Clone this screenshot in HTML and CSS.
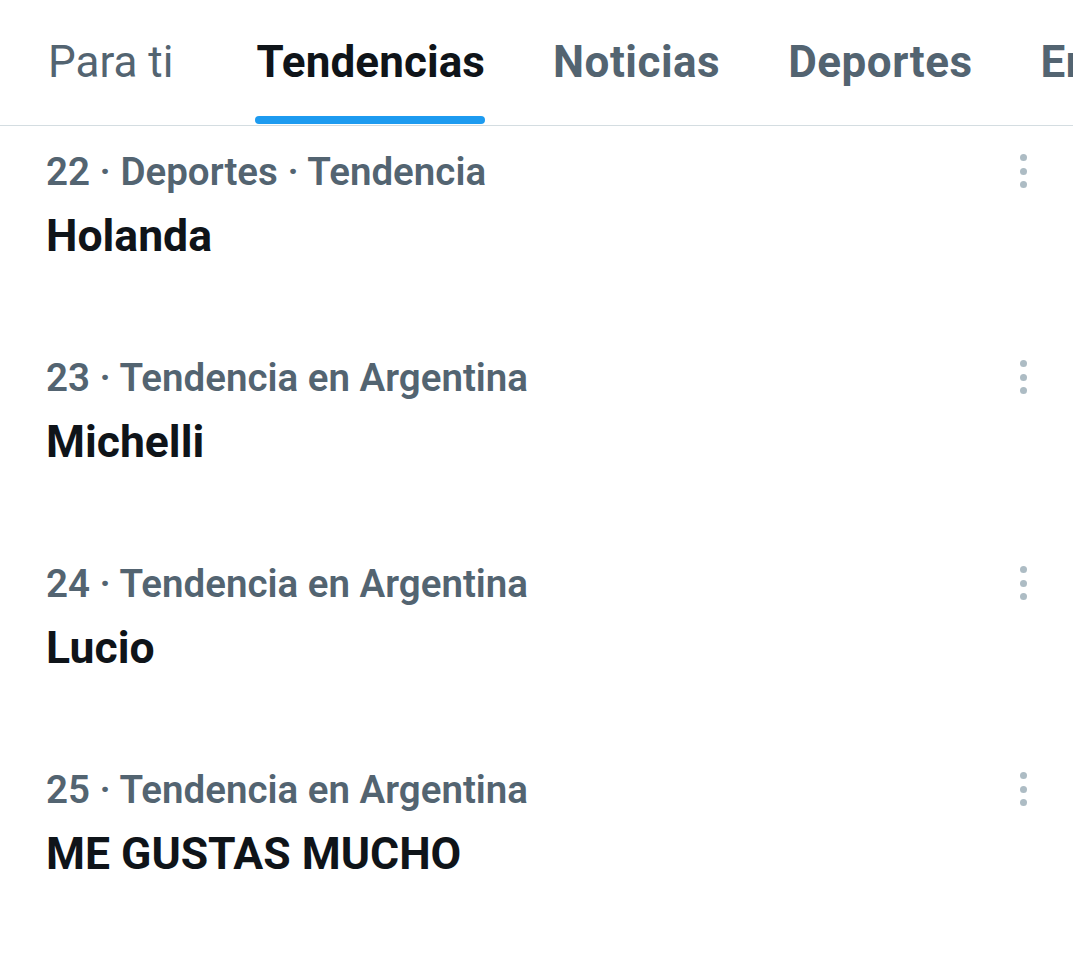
FILE: index.html
```html
<!DOCTYPE html>
<html lang="es">
<head>
<meta charset="utf-8">
<link rel="stylesheet" href="styles.css">
</head>
<body>
<nav class="tabs">
  <div class="tab tab-light">Para ti</div>
  <div class="tab tab-active"><span class="tab-label">Tendencias</span></div>
  <div class="tab">Noticias</div>
  <div class="tab">Deportes</div>
  <div class="tab">Entretenimiento</div>
</nav>
<main class="list">
  <div class="trend">
    <div class="trend-text">
      <div class="meta">22 · Deportes · Tendencia</div>
      <div class="title">Holanda</div>
    </div>
    <div class="more"><span></span><span></span><span></span></div>
  </div>
  <div class="trend">
    <div class="trend-text">
      <div class="meta">23 · Tendencia en Argentina</div>
      <div class="title">Michelli</div>
    </div>
    <div class="more"><span></span><span></span><span></span></div>
  </div>
  <div class="trend">
    <div class="trend-text">
      <div class="meta">24 · Tendencia en Argentina</div>
      <div class="title">Lucio</div>
    </div>
    <div class="more"><span></span><span></span><span></span></div>
  </div>
  <div class="trend">
    <div class="trend-text">
      <div class="meta">25 · Tendencia en Argentina</div>
      <div class="title">ME GUSTAS MUCHO</div>
    </div>
    <div class="more"><span></span><span></span><span></span></div>
  </div>
</main>
</body>
</html>
```
FILE: styles.css
```css
html, body {
  margin: 0;
  padding: 0;
  background: #ffffff;
  overflow: hidden;
}
body {
  font-family: Roboto, "Liberation Sans", sans-serif;
  width: 1073px;
  height: 972px;
}
.tabs {
  display: flex;
  height: 125px;
  border-bottom: 1.5px solid #d4dde1;
  padding-left: 14px;
  white-space: nowrap;
  overflow: hidden;
}
.tab {
  position: relative;
  padding: 0 34px;
  font-size: 44px;
  font-weight: 700;
  letter-spacing: 0.5px;
  color: #536471;
  line-height: 125px;
  flex: none;
}
.tab-light {
  font-weight: 400;
  letter-spacing: 0;
  padding-right: 49px;
}
.tab-active {
  color: #0f1419;
  letter-spacing: 0.1px;
}
.tab-label {
  position: relative;
  display: inline-block;
}
.tab-label::after {
  content: "";
  position: absolute;
  left: -1px;
  right: 0;
  top: 116px;
  height: 8px;
  border-radius: 4px;
  background: #1d9bf0;
}
.list {
  display: flex;
  flex-direction: column;
}
.trend {
  display: flex;
  justify-content: space-between;
  height: 206px;
  padding: 23px 46px 0 46px;
  box-sizing: border-box;
}
.meta {
  font-size: 38.5px;
  font-weight: 600;
  color: #536471;
  line-height: 46px;
}
.title {
  font-size: 44.5px;
  font-weight: 700;
  color: #0f1419;
  line-height: 60px;
  margin-top: 11px;
}
.more {
  display: flex;
  flex-direction: column;
  gap: 6.5px;
  padding-top: 5px;
}
.more span {
  width: 7px;
  height: 7px;
  border-radius: 50%;
  background: #adbcc4;
}
```
